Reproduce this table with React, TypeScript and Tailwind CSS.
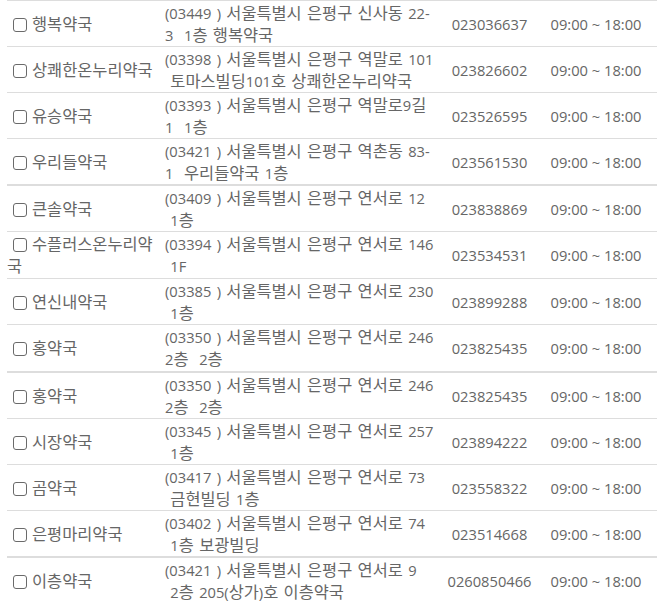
import React from "react";

type Row = {
  name: string;
  a1: string;
  a2: string;
  phone: string;
  h: string;
  thick?: boolean;
};

const rows: Row[] = [
  { name: "행복약국", a1: "(03449 ) 서울특별시 은평구 신사동 22-", a2: "3  1층 행복약국", phone: "023036637", h: "h-[46px]" },
  { name: "상쾌한온누리약국", a1: "(03398 ) 서울특별시 은평구 역말로 101", a2: " 토마스빌딩101호 상쾌한온누리약국", phone: "023826602", h: "h-[46px]" },
  { name: "유승약국", a1: "(03393 ) 서울특별시 은평구 역말로9길", a2: "1  1층", phone: "023526595", h: "h-[46px]" },
  { name: "우리들약국", a1: "(03421 ) 서울특별시 은평구 역촌동 83-", a2: "1  우리들약국 1층", phone: "023561530", h: "h-[46px]" },
  { name: "큰솔약국", a1: "(03409 ) 서울특별시 은평구 연서로 12", a2: " 1층", phone: "023838869", h: "h-[47px]", thick: true },
  { name: "수플러스온누리약\n국", a1: "(03394 ) 서울특별시 은평구 연서로 146", a2: " 1F", phone: "023534531", h: "h-[47px]" },
  { name: "연신내약국", a1: "(03385 ) 서울특별시 은평구 연서로 230", a2: " 1층", phone: "023899288", h: "h-[46px]" },
  { name: "홍약국", a1: "(03350 ) 서울특별시 은평구 연서로 246", a2: "2층  2층", phone: "023825435", h: "h-[47px]" },
  { name: "홍약국", a1: "(03350 ) 서울특별시 은평구 연서로 246", a2: "2층  2층", phone: "023825435", h: "h-[47px]", thick: true },
  { name: "시장약국", a1: "(03345 ) 서울특별시 은평구 연서로 257", a2: " 1층", phone: "023894222", h: "h-[46px]" },
  { name: "곰약국", a1: "(03417 ) 서울특별시 은평구 연서로 73", a2: " 금현빌딩 1층", phone: "023558322", h: "h-[46px]" },
  { name: "은평마리약국", a1: "(03402 ) 서울특별시 은평구 연서로 74", a2: " 1층 보광빌딩", phone: "023514668", h: "h-[46px]" },
  { name: "이층약국", a1: "(03421 ) 서울특별시 은평구 연서로 9", a2: " 2층 205(상가)호 이층약국", phone: "0260850466", h: "h-[48px]", thick: true },
];

function K({ s }: { s: string }) {
  const parts = s.split(/([\uAC00-\uD7A3]+)/);
  return (
    <>
      {parts.map((p, i) =>
        /[\uAC00-\uD7A3]/.test(p) ? (
          <span key={i} className="text-[16.4px]">
            {p}
          </span>
        ) : (
          <React.Fragment key={i}>{p}</React.Fragment>
        )
      )}
    </>
  );
}

function Box() {
  return (
    <span className="inline-block align-middle w-[14px] h-[14px] border-[1.5px] border-[#6a6a6a] rounded-[3px] bg-white ml-[6px] mr-[5px] relative top-[-1px]" />
  );
}

export default function App() {
  return (
    <div
      className="w-[657px] h-[604px] overflow-hidden bg-white text-[#666666] text-[14.7px] leading-[22px] [word-spacing:1.5px]"
      style={{ fontFamily: '"Open Sans", "Noto Sans CJK KR", sans-serif' }}
    >
      <div className="ml-[7px]">
        {rows.map((r, i) => {
          const parts = r.name.split("\n");
          return (
            <div
              key={i}
              className={`flex ${r.h} border-[#dddddd] ${r.thick ? "border-t-2" : "border-t"}`}
            >
              <div className="w-[158px] flex items-center">
                <div>
                  <Box />
                  <K s={parts[0]} />
                  {parts[1] && (
                    <>
                      <br />
                      <K s={parts[1]} />
                    </>
                  )}
                </div>
              </div>
              <div className="w-[277px] flex items-center">
                <div className="whitespace-pre">
                  <K s={r.a1} />
                  <br />
                  <K s={r.a2} />
                </div>
              </div>
              <div className="w-[95px] flex items-center justify-center">{r.phone}</div>
              <div className="w-[118px] flex items-center justify-center [word-spacing:0px]">09:00 ~ 18:00</div>
            </div>
          );
        })}
      </div>
    </div>
  );
}
